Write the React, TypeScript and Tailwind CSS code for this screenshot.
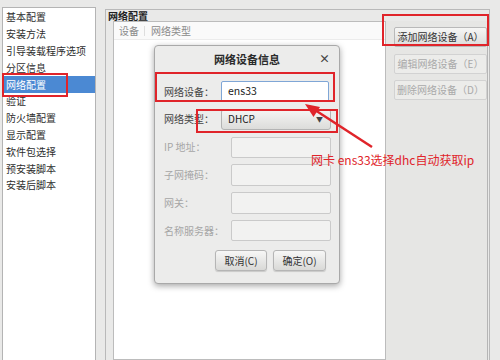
const font = "font-['Noto_Sans_CJK_SC','Noto_Sans','DejaVu_Sans',sans-serif]";

const sections = [
  '基本配置',
  '安装方法',
  '引导装载程序选项',
  '分区信息',
  '网络配置',
  '验证',
  '防火墙配置',
  '显示配置',
  '软件包选择',
  '预安装脚本',
  '安装后脚本',
];

const Sidebar = () => (
  <div className="mt-[7px] ml-[2px] w-[94px] bg-white border-l border-t border-r border-[#b4b4b4] pt-[1px] shrink-0">
    {sections.map((s) => (
      <div
        key={s}
        className={`h-[16.8px] pl-[3px] flex items-center leading-none ${
          s === '网络配置' ? 'bg-[#4b89d3] text-white' : 'text-[#2e2e2e]'
        }`}
      >
        {s}
      </div>
    ))}
  </div>
);

const SideButton = ({ label, disabled }: { label: string; disabled?: boolean }) => (
  <div
    className={`h-[20px] w-[93px] flex items-center justify-center rounded-[2px] border leading-none ${
      disabled
        ? 'border-[#d2d2d2] bg-[#ececea] text-[#a9a9a9]'
        : 'border-[#b9b9b9] bg-gradient-to-b from-[#f6f6f5] to-[#dcdcda] text-[#333]'
    }`}
  >
    {label}
  </div>
);

const NetworkGroup = () => (
  <div className="ml-[9px] mt-[9px] w-[385px] flex flex-col border-l border-t border-r border-[#b9b9b9]">
    <div className="h-[11px] pl-[2px] font-bold text-[#222] leading-[11px]">网络配置</div>
    <div className="flex flex-1">
      <div className="ml-[7px] w-[273px] bg-white border border-[#bcbcbc] flex flex-col">
        <div className="h-[18px] flex items-center text-[#8a8a8a] bg-[#fafafa] border-b border-[#ececec] leading-none">
          <span className="pl-[5px] pr-[5px] border-r border-[#dedede]">设备</span>
          <span className="pl-[6px]">网络类型</span>
        </div>
        <div className="flex-1" />
      </div>
      <div className="w-[102px] bg-[#e6e6e4] border-r border-[#b5b5b5] pl-[8px] pt-[6px] flex flex-col gap-[6.5px]">
        <SideButton label="添加网络设备（A）" />
        <SideButton label="编辑网络设备（E）" disabled />
        <SideButton label="删除网络设备（D）" disabled />
      </div>
    </div>
  </div>
);

const Field = ({ label, wide, disabled, children }: { label: string; wide?: boolean; disabled?: boolean; children?: React.ReactNode }) => (
  <div className="h-[21.4px] flex items-center">
    <div className={`${wide ? 'w-[66px]' : 'w-[76px]'} pl-[9px] leading-none ${disabled ? 'text-[#a6a6a6]' : 'text-[#444]'}`}>
      {label}
    </div>
    {children ?? <div className="h-full w-[100px] bg-[#f2f2f1] border border-[#cacaca] rounded-[2px]" />}
  </div>
);

const Dialog = () => (
  <div className="absolute left-[154px] top-[45px] w-[186px] h-[239px] bg-[#ececeb] border border-[#a9a9a9] rounded-[4px] shadow-[0_2px_6px_rgba(0,0,0,0.35)] flex flex-col">
    <div className="relative h-[26px] flex items-center justify-center font-bold text-[11px] text-[#2b2b2b] leading-none">
      网络设备信息
      <span className="absolute right-[9px] top-[7px] text-[11px] font-bold text-[#444]">×</span>
    </div>
    <div className="mt-[9px] flex flex-col gap-[6.4px]">
      <Field label="网络设备：" wide>
        <div className="h-full w-[108px] bg-white border border-[#7fa6d6] rounded-[2px] flex items-center pl-[6px] text-[10.5px] text-[#222] leading-none">
          ens33
        </div>
      </Field>
      <Field label="网络类型：" wide>
        <div className="h-full w-[110px] bg-gradient-to-b from-[#f5f5f4] to-[#dcdcda] border border-[#b3b3b3] rounded-[3px] flex items-center justify-between pl-[6px] pr-[7px] text-[#222] leading-none">
          <span>DHCP</span>
          <span className="text-[7px] text-[#444]">▼</span>
        </div>
      </Field>
      <Field label="IP 地址：" disabled />
      <Field label="子网掩码：" disabled />
      <Field label="网关：" disabled />
      <Field label="名称服务器：" disabled />
    </div>
    <div className="mt-[9px] flex justify-end gap-[6px] pr-[13px]">
      <div className="h-[21px] w-[52px] flex items-center justify-center rounded-[3px] border border-[#b5b5b5] bg-gradient-to-b from-[#f7f7f6] to-[#d9d9d7] shadow-[0_1px_1px_rgba(0,0,0,0.15)] text-[#333] leading-none">
        取消(C)
      </div>
      <div className="h-[21px] w-[53px] flex items-center justify-center rounded-[3px] border border-[#b5b5b5] bg-gradient-to-b from-[#f7f7f6] to-[#d9d9d7] shadow-[0_1px_1px_rgba(0,0,0,0.15)] text-[#333] leading-none">
        确定(O)
      </div>
    </div>
  </div>
);

export default function App() {
  return (
    <div className={`relative w-[500px] h-[360px] overflow-hidden bg-[#e9e9e8] text-[10px] ${font}`}>
      <div className="flex h-full">
        <Sidebar />
        <NetworkGroup />
      </div>

      <Dialog />

      {/* annotations */}
      <div className="absolute left-[2px] top-[73px] w-[66px] h-[24px] border-2 border-[#e0242a]" />
      <div className="absolute left-[382px] top-[14px] w-[107px] h-[32px] border-2 border-[#e0242a]" />
      <div className="absolute left-[155px] top-[72px] w-[180px] h-[30px] border-2 border-[#e0242a]" />
      <div className="absolute left-[196px] top-[109px] w-[142px] h-[24px] border-2 border-[#e0242a]" />

      <svg className="absolute left-0 top-0" width="500" height="360" viewBox="0 0 500 360">
        <line x1="372" y1="147" x2="315" y2="110" stroke="#e0242a" strokeWidth="2.5" />
        <polygon points="305,104 320,107 313.5,117" fill="#e0242a" />
      </svg>

      <div className="absolute left-[311px] top-[151px] text-[12px] text-[#e0242a] leading-[18px] whitespace-nowrap">
        网卡 ens33选择dhc自动获取ip
      </div>
    </div>
  );
}
